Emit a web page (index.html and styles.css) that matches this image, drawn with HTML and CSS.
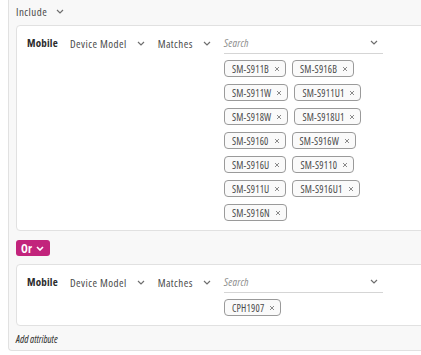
FILE: index.html
```html
<!DOCTYPE html>
<html lang="en">
<head>
    <meta charset="UTF-8">
    <meta name="viewport" content="width=device-width, initial-scale=1.0">
    <title>Audience Rules</title>
    <link rel="stylesheet" href="styles.css">
</head>
<body>

    <!-- Rule group -->
    <section class="group">
        <div class="group-head">
            <span>Include</span>
            <svg class="chev" viewBox="0 0 8 5"><path d="M1 1l3 3 3-3"/></svg>
        </div>

        <!-- Condition 1 -->
        <div class="card">
            <span class="source">Mobile</span>
            <span class="picker">Device Model <svg class="chev" viewBox="0 0 8 5"><path d="M1 1l3 3 3-3"/></svg></span>
            <span class="picker">Matches <svg class="chev" viewBox="0 0 8 5"><path d="M1 1l3 3 3-3"/></svg></span>
            <div class="values">
                <div class="search">
                    <span>Search</span>
                    <svg class="chev" viewBox="0 0 8 5"><path d="M1 1l3 3 3-3"/></svg>
                </div>
                <div class="tags">
                    <span class="tag">SM-S911B <svg class="x" viewBox="0 0 6 6"><path d="M1 1l4 4M5 1l-4 4"/></svg></span>
                    <span class="tag">SM-S916B <svg class="x" viewBox="0 0 6 6"><path d="M1 1l4 4M5 1l-4 4"/></svg></span>
                    <span class="tag">SM-S911W <svg class="x" viewBox="0 0 6 6"><path d="M1 1l4 4M5 1l-4 4"/></svg></span>
                    <span class="tag">SM-S911U1 <svg class="x" viewBox="0 0 6 6"><path d="M1 1l4 4M5 1l-4 4"/></svg></span>
                    <span class="tag">SM-S918W <svg class="x" viewBox="0 0 6 6"><path d="M1 1l4 4M5 1l-4 4"/></svg></span>
                    <span class="tag">SM-S918U1 <svg class="x" viewBox="0 0 6 6"><path d="M1 1l4 4M5 1l-4 4"/></svg></span>
                    <span class="tag">SM-S9160 <svg class="x" viewBox="0 0 6 6"><path d="M1 1l4 4M5 1l-4 4"/></svg></span>
                    <span class="tag">SM-S916W <svg class="x" viewBox="0 0 6 6"><path d="M1 1l4 4M5 1l-4 4"/></svg></span>
                    <span class="tag">SM-S916U <svg class="x" viewBox="0 0 6 6"><path d="M1 1l4 4M5 1l-4 4"/></svg></span>
                    <span class="tag">SM-S9110 <svg class="x" viewBox="0 0 6 6"><path d="M1 1l4 4M5 1l-4 4"/></svg></span>
                    <span class="tag">SM-S911U <svg class="x" viewBox="0 0 6 6"><path d="M1 1l4 4M5 1l-4 4"/></svg></span>
                    <span class="tag">SM-S916U1 <svg class="x" viewBox="0 0 6 6"><path d="M1 1l4 4M5 1l-4 4"/></svg></span>
                    <span class="tag">SM-S916N <svg class="x" viewBox="0 0 6 6"><path d="M1 1l4 4M5 1l-4 4"/></svg></span>
                </div>
            </div>
        </div>

        <button class="or-btn">Or <svg class="chev" viewBox="0 0 8 5"><path d="M1 1l3 3 3-3"/></svg></button>

        <!-- Condition 2 -->
        <div class="card">
            <span class="source">Mobile</span>
            <span class="picker">Device Model <svg class="chev" viewBox="0 0 8 5"><path d="M1 1l3 3 3-3"/></svg></span>
            <span class="picker">Matches <svg class="chev" viewBox="0 0 8 5"><path d="M1 1l3 3 3-3"/></svg></span>
            <div class="values">
                <div class="search">
                    <span>Search</span>
                    <svg class="chev" viewBox="0 0 8 5"><path d="M1 1l3 3 3-3"/></svg>
                </div>
                <div class="tags">
                    <span class="tag">CPH1907 <svg class="x" viewBox="0 0 6 6"><path d="M1 1l4 4M5 1l-4 4"/></svg></span>
                </div>
            </div>
        </div>

        <a class="add-attr" href="#">Add attribute</a>
    </section>

</body>
</html>
```

FILE: styles.css
```css
/* General Reset */
* {
    margin: 0;
    padding: 0;
    box-sizing: border-box;
}

body {
    background: #fff;
    color: #4b4b4b;
    font-family: 'Open Sans', sans-serif;
    font-size: 11px;
    font-stretch: 75%;
    letter-spacing: 0.45px;
    overflow: hidden;
}

/* Chevron + close icons */
.chev {
    width: 8px;
    height: 5px;
    fill: none;
    stroke: #6e6e6e;
    stroke-width: 1.2;
    flex-shrink: 0;
}

.x {
    width: 6px;
    height: 6px;
    fill: none;
    stroke: #8a8a8a;
    stroke-width: 1;
    flex-shrink: 0;
}

/* Rule group */
.group {
    margin-left: 8px;
    width: 440px;
    height: 351px;
    background: #f8f8f8;
    border: 1px solid #e1e1e1;
    border-top: none;
    border-right: none;
    border-bottom-left-radius: 4px;
    padding: 3px 0 0 7px;
    display: flex;
    flex-direction: column;
    align-items: flex-start;
}

.group-head {
    display: flex;
    align-items: center;
    gap: 9px;
    height: 16px;
    margin-bottom: 6px;
}

/* Condition card */
.card {
    width: 100%;
    background: #fff;
    border: 1px solid #e1e1e1;
    border-radius: 4px;
    padding: 7px 10px 9px 10px;
    display: flex;
    align-items: flex-start;
}

.source {
    font-weight: 700;
    letter-spacing: 0.2px;
    color: #2c2c2c;
    line-height: 20px;
    margin-right: 12px;
}

.picker {
    display: flex;
    align-items: center;
    gap: 10px;
    height: 20px;
    margin-right: 13px;
}

.values {
    width: 159px;
}

.search {
    display: flex;
    justify-content: space-between;
    align-items: center;
    height: 21px;
    border-bottom: 1px solid #d5d5d5;
    padding: 0 5px 1px 0;
    color: #8e8e8e;
    font-style: italic;
    letter-spacing: 0.2px;
}

.tags {
    display: flex;
    flex-wrap: wrap;
    gap: 7px 6px;
    margin-top: 6px;
}

.tag {
    display: inline-flex;
    align-items: center;
    gap: 5px;
    height: 17px;
    padding: 0 5px 0 7px;
    border: 1px solid #9a9a9a;
    border-radius: 4px;
    background: #fafafa;
    font-size: 10px;
    letter-spacing: 0.2px;
}

/* Or toggle */
.or-btn {
    display: flex;
    align-items: center;
    gap: 4px;
    height: 16px;
    margin: 9px 0 8px;
    padding: 0 6px 0 5px;
    border: none;
    border-radius: 3px;
    background: #c2247c;
    color: #fff;
    font-family: 'Open Sans', sans-serif;
    font-stretch: 75%;
    font-weight: 700;
    font-size: 11.5px;
    letter-spacing: 0.3px;
}

.or-btn .chev {
    stroke: #fff;
    stroke-width: 1.6;
}

.add-attr {
    margin-top: 6px;
    font-size: 10px;
    font-style: italic;
    letter-spacing: 0;
    color: #2c2c2c;
    text-decoration: none;
}
```
